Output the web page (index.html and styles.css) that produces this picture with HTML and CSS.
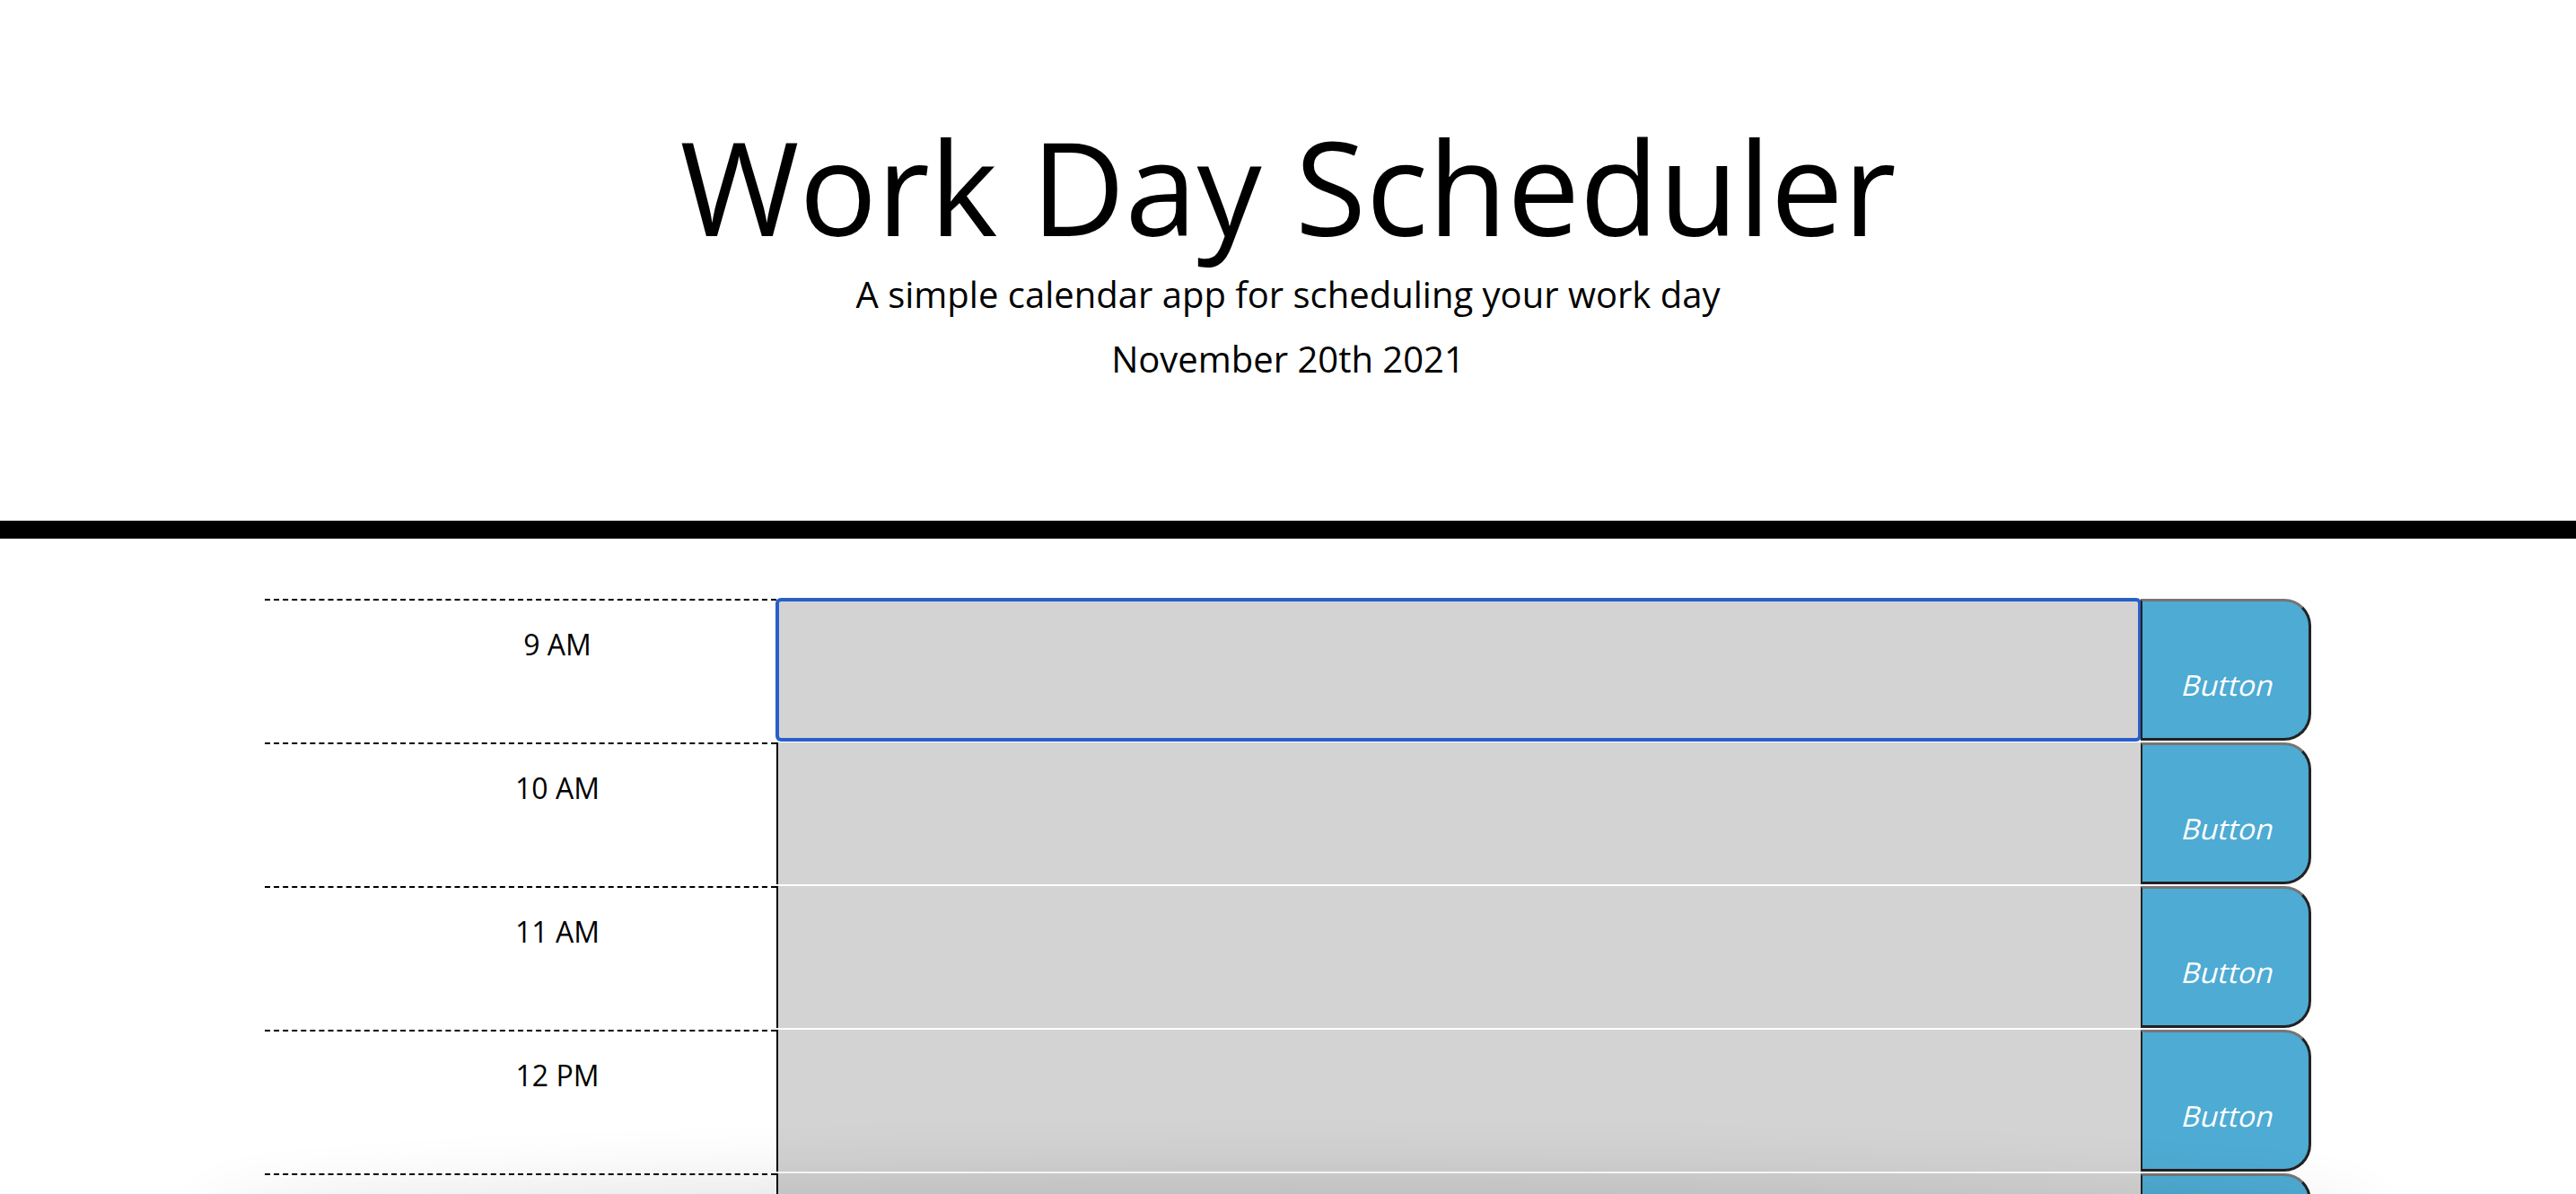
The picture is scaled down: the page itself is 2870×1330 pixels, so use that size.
FILE: index.html
```html
<!DOCTYPE html>
<html lang="en">
<head>
<meta charset="utf-8">
<title>Work Day Scheduler</title>
<link rel="stylesheet" href="styles.css">
</head>
<body>
<header class="jumbotron">
  <h1 class="title">Work Day Scheduler</h1>
  <p class="lead">A simple calendar app for scheduling your work day</p>
  <p class="lead current-day">November 20th 2021</p>
</header>
<main class="container">
  <div class="time-block">
    <div class="hour">9 AM</div>
    <textarea class="description is-focused" aria-label="9 AM"></textarea>
    <button class="save-btn" type="button"><span class="btn-label">Button</span></button>
  </div>
  <div class="time-block">
    <div class="hour">10 AM</div>
    <textarea class="description" aria-label="10 AM"></textarea>
    <button class="save-btn" type="button"><span class="btn-label">Button</span></button>
  </div>
  <div class="time-block">
    <div class="hour">11 AM</div>
    <textarea class="description" aria-label="11 AM"></textarea>
    <button class="save-btn" type="button"><span class="btn-label">Button</span></button>
  </div>
  <div class="time-block">
    <div class="hour">12 PM</div>
    <textarea class="description" aria-label="12 PM"></textarea>
    <button class="save-btn" type="button"><span class="btn-label">Button</span></button>
  </div>
  <div class="time-block">
    <div class="hour">1 PM</div>
    <textarea class="description" aria-label="1 PM"></textarea>
    <button class="save-btn" type="button"><span class="btn-label">Button</span></button>
  </div>
  <div class="time-block">
    <div class="hour">2 PM</div>
    <textarea class="description" aria-label="2 PM"></textarea>
    <button class="save-btn" type="button"><span class="btn-label">Button</span></button>
  </div>
</main>
<div class="shade" aria-hidden="true"></div>
</body>
</html>
```

FILE: styles.css
```css
* {
  box-sizing: border-box;
}

html,
body {
  margin: 0;
  background: #ffffff;
}

body {
  font-family: "Open Sans", "Liberation Sans", sans-serif;
  color: #000000;
}

.jumbotron {
  text-align: center;
  padding: 121px 0 150px;
  border-bottom: 20px solid #000000;
  margin-bottom: 65px;
}

.title {
  font-size: 144px;
  font-weight: 400;
  line-height: 172px;
  margin: 0 0 5px;
}

.lead {
  font-size: 40px;
  font-weight: 400;
  line-height: 60px;
  margin: 0 0 12px;
}

.current-day {
  margin-bottom: 0;
}

.container {
  width: 2280px;
  margin: 0 auto;
}

.time-block {
  display: grid;
  grid-template-columns: 570px 1520px 190px;
  height: 160px;
  border-top: 2px solid #ffffff;
}

.hour {
  border-top: 2px dashed #000000;
  padding: 25px 0 0 82px;
  text-align: center;
  font-size: 32px;
  line-height: 48px;
}

.description {
  display: block;
  width: 100%;
  height: 100%;
  margin: 0;
  padding: 20px;
  border: none;
  border-left: 2px solid #000000;
  background: #d3d3d3;
  resize: none;
  font-family: inherit;
  font-size: 32px;
  color: #000000;
}

.description.is-focused {
  border-radius: 5px;
  outline: 4px solid #295fc8;
  outline-offset: -3px;
}

.save-btn {
  display: flex;
  align-items: center;
  justify-content: center;
  margin: 0;
  padding: 34px 0 0 6px;
  border-style: solid;
  border-width: 3px 3px 3px 2px;
  border-color: #767676 #222222 #222222 #222222;
  border-radius: 0 30px 30px 0;
  background: #4eabd3;
  color: #ffffff;
  font-family: inherit;
  font-size: 32px;
  line-height: 48px;
}

.btn-label {
  display: inline-block;
  font-style: normal;
  transform: skewX(-14deg);
}

.shade {
  position: fixed;
  left: 240px;
  right: 240px;
  bottom: -70px;
  height: 70px;
  border-radius: 50%;
  box-shadow: 0 0 70px 20px rgba(0, 0, 0, 0.11);
  pointer-events: none;
}
```
